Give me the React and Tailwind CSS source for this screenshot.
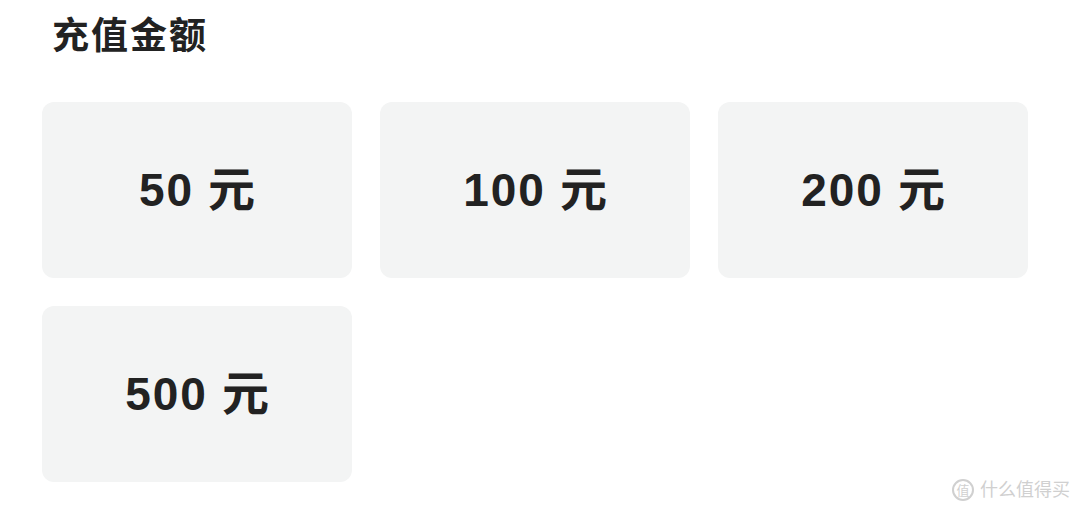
import React, { useState } from "react";

const AMOUNTS = [50, 100, 200, 500];

export default function App() {
  const [selected, setSelected] = useState(null);

  return (
    <div
      className="relative w-[1080px] h-[511px] bg-white overflow-hidden"
      style={{ fontFamily: '"Liberation Sans", "Noto Sans CJK SC", sans-serif' }}
    >
      <div className="pl-[42px] pt-[14px]">
        <h1 className="pl-[10px] text-[37px] leading-[46px] font-bold text-[#222] tracking-[2px]">充值金额</h1>

        <div className="mt-[42px] grid grid-cols-[310px_310px_310px] gap-[28px]">
          {AMOUNTS.map((amt) => (
            <button
              key={amt}
              onClick={() => setSelected(amt)}
              className={
                "h-[176px] rounded-[12px] flex items-center justify-center gap-[14px] font-bold text-[#222] " +
                (selected === amt ? "bg-[#fdecec]" : "bg-[#f3f4f4]")
              }
            >
              <span className="text-[46px] tracking-[2px]">{amt}</span>
              <span className="text-[47px]">元</span>
            </button>
          ))}
        </div>
      </div>

      {/* watermark */}
      <div className="absolute right-[10px] bottom-[10px] flex items-center gap-[6px] text-[#d0d0d0]">
        <span className="w-[22px] h-[22px] rounded-full border-2 border-[#d0d0d0] flex items-center justify-center text-[13px] leading-none">
          值
        </span>
        <span className="text-[18px] leading-none">什么值得买</span>
      </div>
    </div>
  );
}
